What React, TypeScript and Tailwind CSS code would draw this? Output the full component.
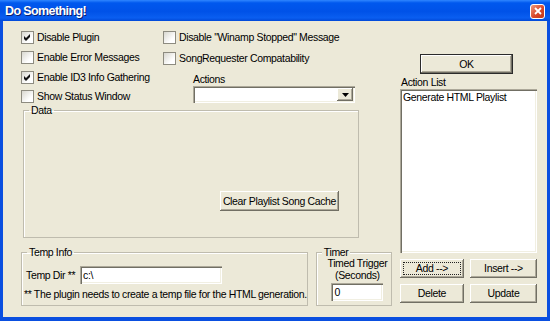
import React from "react";

type CheckProps = {
  label: string;
  checked?: boolean;
  className?: string;
};

function Check({ label, checked, className = "" }: CheckProps) {
  return (
    <div className={`flex h-[15px] items-center ${className}`}>
      <span className="flex h-[13px] w-[13px] shrink-0 items-center justify-center border border-[#8d8b80] bg-[linear-gradient(135deg,#d8d7cf,#ffffff_70%)]">
        {checked && (
          <svg width="7" height="7" viewBox="0 0 7 7">
            <path d="M0 2 L2 4 L6 0 L6 3 L2 7 L0 5 Z" fill="#111" />
          </svg>
        )}
      </span>
      <span className="ml-[3px] whitespace-nowrap">{label}</span>
    </div>
  );
}

type BtnProps = {
  children: React.ReactNode;
  className?: string;
  def?: boolean;
  focus?: boolean;
};

function Btn({ children, className = "", def, focus }: BtnProps) {
  return (
    <div
      className={`relative flex items-center justify-center bg-[#ece9d8] whitespace-nowrap ${
        def
          ? "border border-[#2b2b2b] shadow-[inset_-1px_-1px_#716f64,inset_1px_1px_#ffffff,inset_-2px_-2px_#aca899]"
          : "shadow-[inset_-1px_-1px_#716f64,inset_1px_1px_#ffffff,inset_-2px_-2px_#aca899]"
      } ${className}`}
    >
      {focus && (
        <span className="absolute inset-[3px] border border-dotted border-[#222]" />
      )}
      {children}
    </div>
  );
}

const sunken =
  "bg-white shadow-[inset_1px_1px_#aca899,inset_2px_2px_#716f64,inset_-1px_-1px_#ffffff,inset_-2px_-2px_#f1efe2]";

export default function App() {
  return (
    <div className="flex h-[321px] w-[550px] flex-col bg-[#0a4fe0] font-['Liberation_Sans',Arial,sans-serif] text-[10.5px] leading-[13px] tracking-[-0.35px] text-black">
      {/* title bar */}
      <div className="flex h-[21px] items-center justify-between bg-[linear-gradient(to_bottom,#2f86ff_0%,#0058ee_14%,#0052e8_55%,#0a5ef0_85%,#0048d8_100%)] pl-[5px] pr-[5px]">
        <span className="text-[12.5px] font-bold leading-[14px] tracking-[-0.6px] text-white [text-shadow:1px_1px_#0a1e6e]">
          Do Something!
        </span>
        <div className="mt-[1px] flex h-[15px] w-[15px] items-center justify-center rounded-[3px] border border-white bg-[linear-gradient(135deg,#ee9a7e,#d9482a_55%,#c2381c)]">
          <svg width="8" height="8" viewBox="0 0 8 8">
            <path d="M1 1 L7 7 M7 1 L1 7" stroke="white" strokeWidth="1.8" />
          </svg>
        </div>
      </div>

      {/* body */}
      <div className="mx-[3px] mb-[4px] flex flex-1 bg-[#ece9d8]">
        {/* left column */}
        <div className="flex w-[389px] flex-col pl-[18px] pt-[9px]">
          <div className="flex h-[74px]">
            <div className="flex w-[142px] flex-col">
              <Check label="Disable Plugin" checked />
              <Check label="Enable Error Messages" className="mt-[5px]" />
              <Check label="Enable ID3 Info Gathering" checked className="mt-[6px]" />
              <Check label="Show Status Window" className="mt-[4px]" />
            </div>
            <div className="flex flex-col">
              <Check label={'Disable "Winamp Stopped" Message'} />
              <Check label="SongRequester Compatability" className="mt-[6px]" />
              <div className="ml-[30px] mt-[7px] flex flex-col">
                <span>Actions</span>
                <div className={`flex h-[17px] w-[162px] items-start justify-end p-[2px] ${sunken}`}>
                  <div className="flex h-[13px] w-[16px] items-center justify-center bg-[#ece9d8] shadow-[inset_-1px_-1px_#716f64,inset_1px_1px_#ffffff,inset_-2px_-2px_#aca899]">
                    <svg width="7" height="4" viewBox="0 0 7 4">
                      <path d="M0 0 L7 0 L3.5 4 Z" fill="#000" />
                    </svg>
                  </div>
                </div>
              </div>
            </div>
          </div>

          <fieldset className="ml-[2px] h-[134px] w-[336px] border border-[#bfbcae] shadow-[inset_1px_1px_#ffffff]">
            <legend className="ml-[5px] px-[2px]">Data</legend>
            <div className="mt-[74px] flex justify-end pr-[19px]">
              <Btn className="h-[20px] w-[119px]">Clear Playlist Song Cache</Btn>
            </div>
          </fieldset>

          <div className="mt-[8px] flex gap-[8px]">
            <fieldset className="h-[60px] w-[285px] border border-[#bfbcae] shadow-[inset_1px_1px_#ffffff]">
              <legend className="ml-[5px] px-[2px]">Temp Info</legend>
              <div className="mt-[7px] flex items-center pl-[4px]">
                <span className="w-[54px] whitespace-nowrap">Temp Dir **</span>
                <div className={`flex h-[18px] w-[142px] items-center pl-[3px] ${sunken}`}>c:\</div>
              </div>
              <div className="mt-[4px] whitespace-nowrap pl-[2px]">
                ** The plugin needs to create a temp file for the HTML generation.
              </div>
            </fieldset>

            <fieldset className="h-[60px] w-[78px] border border-[#bfbcae] shadow-[inset_1px_1px_#ffffff]">
              <legend className="relative z-10 ml-[5px] bg-[#ece9d8] px-[2px]">Timer</legend>
              <div className="-mt-[2px] flex flex-col items-center whitespace-nowrap pl-[7px] leading-[12px]">
                <span>Timed Trigger</span>
                <span>(Seconds)</span>
                <div className={`mt-[2px] flex h-[18px] w-[52px] items-center pl-[3px] ${sunken}`}>0</div>
              </div>
            </fieldset>
          </div>
        </div>

        {/* right column */}
        <div className="ml-[8px] flex w-[137px] flex-col">
          <Btn def className="ml-[20px] mt-[33px] h-[20px] w-[93px]">OK</Btn>
          <span className="mt-[2px] pl-[1px]">Action List</span>
          <div className={`h-[164px] w-[137px] px-[3px] py-[2px] ${sunken}`}>
            Generate HTML Playlist
          </div>
          <div className="mt-[6px] grid grid-cols-[64px_67px] gap-x-[6px] gap-y-[6px]">
            <Btn focus className="h-[19px]">Add --&gt;</Btn>
            <Btn className="h-[19px]">Insert --&gt;</Btn>
            <Btn className="h-[19px]">Delete</Btn>
            <Btn className="h-[19px]">Update</Btn>
          </div>
        </div>
      </div>
    </div>
  );
}
